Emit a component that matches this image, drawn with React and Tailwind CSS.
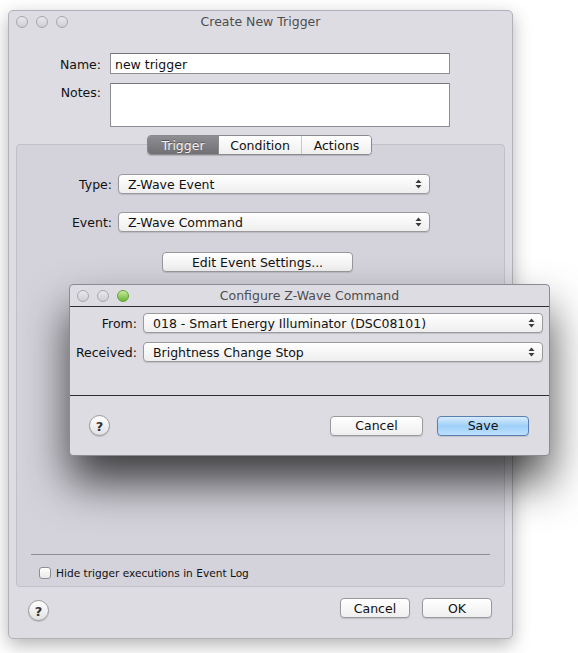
import React from 'react';

// little up/down arrows on the popup buttons
const Arrows = () => (
  <svg width="7" height="10" viewBox="0 0 7 10" className="shrink-0">
    <path d="M3.5 0.5 L6.5 4 L0.5 4 Z" fill="#3c3c3c" />
    <path d="M3.5 9.5 L6.5 6 L0.5 6 Z" fill="#3c3c3c" />
  </svg>
);

const Popup = ({ value, className = '' }) => (
  <div
    className={`flex h-[20px] items-center justify-between rounded-[4px] border border-[#9a9a9e] bg-gradient-to-b from-white to-[#eeeeee] pl-[9px] pr-[7px] shadow-[0_1px_1px_rgba(0,0,0,0.12)] ${className}`}
  >
    <span className="pt-[2px] leading-none text-[#111]">{value}</span>
    <Arrows />
  </div>
);

const Btn = ({ children, blue, className = '' }) => (
  <button
    type="button"
    className={`flex h-[20px] items-center justify-center rounded-[4px] border pt-[2px] leading-none text-[#111] shadow-[0_1px_1px_rgba(0,0,0,0.12)] ${
      blue
        ? 'border-[#5b7fb1] bg-gradient-to-b from-[#d6ebfd] via-[#9fd0f9] to-[#bde0fc]'
        : 'border-[#9a9a9e] bg-gradient-to-b from-white to-[#efefef]'
    } ${className}`}
  >
    {children}
  </button>
);

const Help = () => (
  <div className="flex h-[21px] w-[21px] items-center justify-center rounded-full border border-[#9a9a9e] bg-gradient-to-b from-white to-[#e2e2e4] pt-[1px] text-[13px] font-bold leading-none text-[#333] shadow-[0_1px_1px_rgba(0,0,0,0.15)]">
    ?
  </div>
);

const Lights = ({ green }) => (
  <div className="flex gap-[8px]">
    <span className="h-[12px] w-[12px] rounded-full border border-[#a8a7ad] bg-gradient-to-b from-[#e9e9ec] to-[#cfced4]" />
    <span className="h-[12px] w-[12px] rounded-full border border-[#a8a7ad] bg-gradient-to-b from-[#e9e9ec] to-[#cfced4]" />
    {green ? (
      <span className="h-[12px] w-[12px] rounded-full border border-[#6a9d3c] bg-gradient-to-b from-[#c9ec9a] to-[#68b532]" />
    ) : (
      <span className="h-[12px] w-[12px] rounded-full border border-[#a8a7ad] bg-gradient-to-b from-[#e9e9ec] to-[#cfced4]" />
    )}
  </div>
);

const App = () => {
  return (
    <div className="relative h-[653px] w-[578px] overflow-hidden bg-white font-['DejaVu_Sans',sans-serif] text-[12.5px] text-[#111]">
      {/* main window */}
      <div className="absolute left-[8px] top-[10px] flex h-[629px] w-[505px] flex-col rounded-[5px] border border-[#b3b2b8] bg-[#dddce3] shadow-[0_6px_18px_rgba(0,0,0,0.3)]">
        {/* title bar */}
        <div className="relative flex h-[22px] items-center pl-[7px]">
          <Lights />
          <div className="absolute inset-0 flex items-center justify-center pt-[1px] text-[#4d4d4d]">Create New Trigger</div>
        </div>

        {/* name */}
        <div className="mt-[20px] flex items-center gap-[9px]">
          <div className="w-[92px] pt-[3px] text-right leading-none">Name:</div>
          <div className="flex h-[21px] w-[340px] items-center border border-[#8e8e92] border-t-[#77777b] bg-white pl-[4px] pt-[3px] leading-none">
            new trigger
          </div>
        </div>

        {/* notes */}
        <div className="mt-[9px] flex items-start gap-[9px]">
          <div className="w-[92px] pt-[4px] text-right leading-none">Notes:</div>
          <div className="h-[44px] w-[340px] border border-[#8e8e92] border-t-[#77777b] bg-white" />
        </div>

        {/* tabs */}
        <div className="relative z-10 mt-[8px] flex justify-center">
          <div className="ml-[-2px] flex h-[20px] overflow-hidden rounded-[4px] border border-[#8a8a8e] leading-none shadow-[0_1px_1px_rgba(0,0,0,0.15)]">
            <div className="flex w-[70px] items-center justify-center bg-gradient-to-b from-[#8e8e92] to-[#717175] pt-[2px] text-[#f2f2f2] [text-shadow:0_-1px_0_rgba(0,0,0,0.35)]">
              Trigger
            </div>
            <div className="flex w-[83px] items-center justify-center border-l border-[#8a8a8e] bg-gradient-to-b from-white to-[#efefef] pt-[2px]">
              Condition
            </div>
            <div className="flex w-[70px] items-center justify-center border-l border-[#c9c9cc] bg-gradient-to-b from-white to-[#efefef] pt-[2px]">
              Actions
            </div>
          </div>
        </div>

        {/* panel */}
        <div className="mx-[7px] -mt-[11px] flex h-[443px] flex-col rounded-[4px] border border-[#c2c1c8] bg-[#d4d3db] pt-[29px]">
          <div className="flex items-center gap-[6px]">
            <div className="w-[95px] pt-[2px] text-right leading-none">Type:</div>
            <Popup value="Z-Wave Event" className="w-[312px]" />
          </div>
          <div className="mt-[18px] flex items-center gap-[6px]">
            <div className="w-[95px] pt-[2px] text-right leading-none">Event:</div>
            <Popup value="Z-Wave Command" className="w-[312px]" />
          </div>
          <Btn className="ml-[145px] mt-[20px] w-[191px]">Edit Event Settings...</Btn>

          <div className="ml-[14px] mt-auto h-px w-[459px] bg-[#8e8d93]" />
          <div className="mb-[7px] ml-[22px] mt-[12px] flex items-center gap-[5px]">
            <span className="h-[12px] w-[12px] rounded-[3px] border border-[#8e8e92] bg-gradient-to-b from-white to-[#e8e8ea]" />
            <span className="text-[10.6px] leading-none">Hide trigger executions in Event Log</span>
          </div>
        </div>

        {/* bottom buttons */}
        <div className="mt-[11px] flex items-start pl-[19px] pr-[20px]">
          <div className="mt-[2px]">
            <Help />
          </div>
          <div className="ml-auto flex gap-[12px]">
            <Btn className="w-[70px]">Cancel</Btn>
            <Btn className="w-[70px]">OK</Btn>
          </div>
        </div>
      </div>

      {/* sheet */}
      <div className="absolute left-[69px] top-[284px] flex h-[172px] w-[481px] flex-col rounded-[4px] border border-[#8c8b91] bg-[#dddce3] shadow-[0_26px_45px_rgba(0,0,0,0.72)]">
        <div className="relative flex h-[22px] items-center border-b border-[#2e2e30] pl-[7px]">
          <Lights green />
          <div className="absolute inset-0 flex items-center justify-center pt-[1px] text-[#4d4d4d]">Configure Z-Wave Command</div>
        </div>

        <div className="flex h-[89px] flex-col border-b border-[#2e2e30] pt-[6px]">
          <div className="flex items-center gap-[6px]">
            <div className="w-[67px] pt-[2px] text-right leading-none">From:</div>
            <Popup value="018 - Smart Energy Illuminator (DSC08101)" className="w-[400px]" />
          </div>
          <div className="mt-[9px] flex items-center gap-[6px]">
            <div className="w-[67px] pt-[2px] text-right leading-none">Received:</div>
            <Popup value="Brightness Change Stop" className="w-[400px]" />
          </div>
        </div>

        <div className="mt-[19px] flex items-center pl-[19px] pr-[20px]">
          <Help />
          <div className="ml-auto flex gap-[14px]">
            <Btn className="w-[93px]">Cancel</Btn>
            <Btn blue className="w-[92px]">Save</Btn>
          </div>
        </div>
      </div>
    </div>
  );
};

export default App;
